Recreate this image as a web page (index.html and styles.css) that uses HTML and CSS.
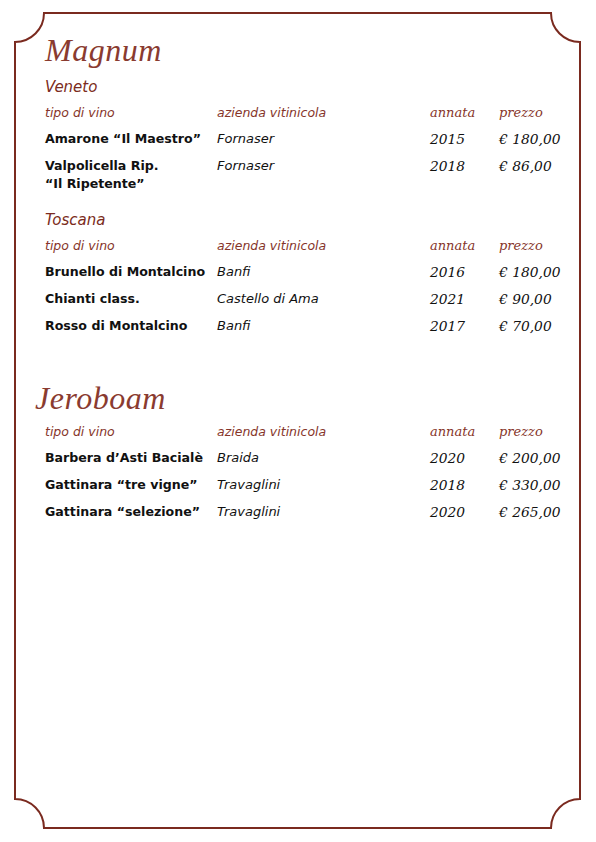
FILE: index.html
```html
<!DOCTYPE html>
<html lang="it">
<head>
<meta charset="utf-8">
<title>Magnum e Jeroboam</title>
<link rel="stylesheet" href="styles.css">
</head>
<body>
<div class="page">
  <svg class="frame" width="596" height="842" viewBox="0 0 596 842" aria-hidden="true">
    <path d="M44 13 H551 A29 29 0 0 0 580 42 V799 A29 29 0 0 0 551 828 H44 A29 29 0 0 0 15 799 V42 A29 29 0 0 0 44 13 Z" fill="none" stroke="#7a2a1f" stroke-width="2"/>
  </svg>

  <section class="format format-first">
    <h1 class="title">Magnum</h1>

    <h2 class="region">Veneto</h2>
    <div class="list">
      <div class="hd">tipo di vino</div><div class="hd">azienda vitinicola</div><div class="hd hd-serif">annata</div><div class="hd hd-serif">prezzo</div>
      <div class="wine">Amarone “Il Maestro”</div><div class="maker">Fornaser</div><div class="num">2015</div><div class="num">€ 180,00</div>
      <div class="wine">Valpolicella Rip.<br>“Il Ripetente”</div><div class="maker">Fornaser</div><div class="num">2018</div><div class="num">€ 86,00</div>
    </div>

    <h2 class="region region-next">Toscana</h2>
    <div class="list">
      <div class="hd">tipo di vino</div><div class="hd">azienda vitinicola</div><div class="hd hd-serif">annata</div><div class="hd hd-serif">prezzo</div>
      <div class="wine">Brunello di Montalcino</div><div class="maker">Banfi</div><div class="num">2016</div><div class="num">€ 180,00</div>
      <div class="wine">Chianti class.</div><div class="maker">Castello di Ama</div><div class="num">2021</div><div class="num">€ 90,00</div>
      <div class="wine">Rosso di Montalcino</div><div class="maker">Banfi</div><div class="num">2017</div><div class="num">€ 70,00</div>
    </div>
  </section>

  <section class="format format-second">
    <h1 class="title title-j">Jeroboam</h1>
    <div class="list list-tight">
      <div class="hd">tipo di vino</div><div class="hd">azienda vitinicola</div><div class="hd hd-serif">annata</div><div class="hd hd-serif">prezzo</div>
      <div class="wine">Barbera d’Asti Bacialè</div><div class="maker">Braida</div><div class="num">2020</div><div class="num">€ 200,00</div>
      <div class="wine">Gattinara “tre vigne”</div><div class="maker">Travaglini</div><div class="num">2018</div><div class="num">€ 330,00</div>
      <div class="wine">Gattinara “selezione”</div><div class="maker">Travaglini</div><div class="num">2020</div><div class="num">€ 265,00</div>
    </div>
  </section>
</div>
</body>
</html>
```

FILE: styles.css
```css
html, body {
  margin: 0;
  padding: 0;
  background: #ffffff;
}

.page {
  position: relative;
  width: 596px;
  height: 842px;
  box-sizing: border-box;
  padding: 30px 0 0 45px;
  font-family: "DejaVu Sans", Verdana, sans-serif;
  color: #111111;
}

.frame {
  position: absolute;
  top: 0;
  left: 0;
  pointer-events: none;
}

.format {
  display: flex;
  flex-direction: column;
}

.format-second {
  margin-top: 43px;
}

.title {
  margin: 0;
  font-family: "Liberation Serif", "Times New Roman", serif;
  font-style: italic;
  font-weight: normal;
  font-size: 32px;
  line-height: 40px;
  color: #8a3b30;
  letter-spacing: 0.5px;
}

.title-j {
  margin-left: -10px;
}

.region {
  margin: 8px 0 8px 0;
  font-family: "DejaVu Sans", Verdana, sans-serif;
  font-style: italic;
  font-weight: normal;
  font-size: 15px;
  line-height: 18px;
  color: #7b2b20;
}

.region-next {
  margin-top: 18px;
}

.list {
  display: grid;
  grid-template-columns: 172px 213px 69px 1fr;
  row-gap: 9px;
  line-height: 18px;
}

.list-tight {
  margin-top: 5px;
}

.hd {
  font-family: "DejaVu Sans", Verdana, sans-serif;
  font-style: italic;
  font-size: 12.5px;
  line-height: 17px;
  color: #86352a;
}

.hd-serif {
  font-family: "DejaVu Serif", Georgia, serif;
  font-size: 13px;
}

.wine {
  font-weight: bold;
  font-size: 12.6px;
  color: #111111;
}

.maker {
  font-style: italic;
  font-size: 13px;
  color: #111111;
}

.num {
  font-family: "DejaVu Serif", Georgia, serif;
  font-style: italic;
  font-size: 13.8px;
  color: #111111;
}
```
